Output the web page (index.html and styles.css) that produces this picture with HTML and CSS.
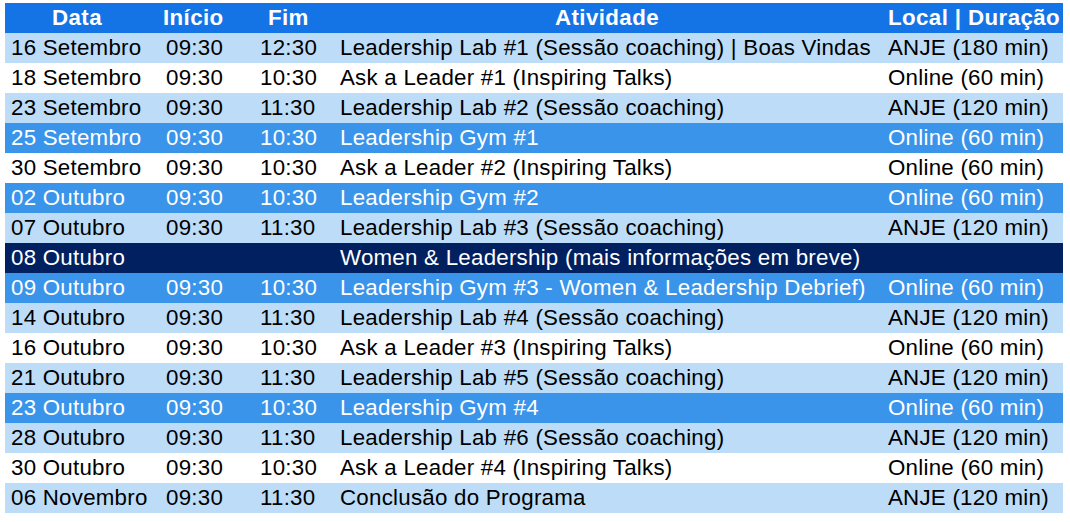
FILE: index.html
```html
<!DOCTYPE html>
<html lang="pt">
<head>
<meta charset="utf-8">
<title>Programa</title>
<link rel="stylesheet" href="styles.css">
</head>
<body>
<div class="wrap">
<table class="sched">
<colgroup>
<col class="c-data"><col class="c-ini"><col class="c-fim"><col class="c-act"><col class="c-loc">
</colgroup>
<thead>
<tr class="head">
<th class="h-data">Data</th><th class="h-ini">Início</th><th class="h-fim">Fim</th><th class="h-act">Atividade</th><th class="h-loc">Local | Duração</th>
</tr>
</thead>
<tbody>
<tr class="light"><td class="d">16 Setembro</td><td class="i">09:30</td><td class="f">12:30</td><td class="a">Leadership Lab #1 (Sessão coaching) | Boas Vindas</td><td class="l">ANJE (180 min)</td></tr>
<tr class="white"><td class="d">18 Setembro</td><td class="i">09:30</td><td class="f">10:30</td><td class="a">Ask a Leader #1 (Inspiring Talks)</td><td class="l">Online (60 min)</td></tr>
<tr class="light"><td class="d">23 Setembro</td><td class="i">09:30</td><td class="f">11:30</td><td class="a">Leadership Lab #2 (Sessão coaching)</td><td class="l">ANJE (120 min)</td></tr>
<tr class="mid"><td class="d">25 Setembro</td><td class="i">09:30</td><td class="f">10:30</td><td class="a">Leadership Gym #1</td><td class="l">Online (60 min)</td></tr>
<tr class="white"><td class="d">30 Setembro</td><td class="i">09:30</td><td class="f">10:30</td><td class="a">Ask a Leader #2 (Inspiring Talks)</td><td class="l">Online (60 min)</td></tr>
<tr class="mid"><td class="d">02 Outubro</td><td class="i">09:30</td><td class="f">10:30</td><td class="a">Leadership Gym #2</td><td class="l">Online (60 min)</td></tr>
<tr class="light"><td class="d">07 Outubro</td><td class="i">09:30</td><td class="f">11:30</td><td class="a">Leadership Lab #3 (Sessão coaching)</td><td class="l">ANJE (120 min)</td></tr>
<tr class="dark"><td class="d">08 Outubro</td><td class="i"></td><td class="f"></td><td class="a">Women &amp; Leadership (mais informações em breve)</td><td class="l"></td></tr>
<tr class="mid"><td class="d">09 Outubro</td><td class="i">09:30</td><td class="f">10:30</td><td class="a">Leadership Gym #3 - Women &amp; Leadership Debrief)</td><td class="l">Online (60 min)</td></tr>
<tr class="light"><td class="d">14 Outubro</td><td class="i">09:30</td><td class="f">11:30</td><td class="a">Leadership Lab #4 (Sessão coaching)</td><td class="l">ANJE (120 min)</td></tr>
<tr class="white"><td class="d">16 Outubro</td><td class="i">09:30</td><td class="f">10:30</td><td class="a">Ask a Leader #3 (Inspiring Talks)</td><td class="l">Online (60 min)</td></tr>
<tr class="light"><td class="d">21 Outubro</td><td class="i">09:30</td><td class="f">11:30</td><td class="a">Leadership Lab #5 (Sessão coaching)</td><td class="l">ANJE (120 min)</td></tr>
<tr class="mid"><td class="d">23 Outubro</td><td class="i">09:30</td><td class="f">10:30</td><td class="a">Leadership Gym #4</td><td class="l">Online (60 min)</td></tr>
<tr class="light"><td class="d">28 Outubro</td><td class="i">09:30</td><td class="f">11:30</td><td class="a">Leadership Lab #6 (Sessão coaching)</td><td class="l">ANJE (120 min)</td></tr>
<tr class="white"><td class="d">30 Outubro</td><td class="i">09:30</td><td class="f">10:30</td><td class="a">Ask a Leader #4 (Inspiring Talks)</td><td class="l">Online (60 min)</td></tr>
<tr class="light"><td class="d">06 Novembro</td><td class="i">09:30</td><td class="f">11:30</td><td class="a">Conclusão do Programa</td><td class="l">ANJE (120 min)</td></tr>
</tbody>
</table>
</div>
</body>
</html>
```
FILE: styles.css
```css
html, body {
  margin: 0;
  padding: 0;
  background: #ffffff;
}
.wrap {
  padding: 3px 5px;
}
.sched {
  border-collapse: collapse;
  table-layout: fixed;
  width: 1058px;
  font-family: "Liberation Sans", Arial, sans-serif;
  font-size: 22.3px;
  line-height: 30px;
  letter-spacing: 0.25px;
  color: #000000;
}
.c-data { width: 155px; }
.c-ini { width: 80px; }
.c-fim { width: 95px; }
.c-act { width: 548px; }
.c-loc { width: 180px; }
.sched th, .sched td {
  padding: 0;
  height: 30px;
  text-align: left;
  white-space: nowrap;
  overflow: visible;
  vertical-align: middle;
}
.head {
  background: #1474e6;
  color: #ffffff;
}
.head th {
  font-weight: bold;
  letter-spacing: 0.4px;
}
.h-data { padding-left: 47px !important; }
.h-ini { padding-left: 3px !important; }
.h-fim { padding-left: 28px !important; }
.h-act { padding-left: 220px !important; }
.h-loc { padding-left: 5px !important; }
.d { padding-left: 6px !important; }
.i { padding-left: 6px !important; }
.f { padding-left: 20px !important; }
.a { padding-left: 5px !important; }
.l { padding-left: 5px !important; }
.light { background: #bddcf8; }
.white { background: #ffffff; }
.mid { background: #3a94ea; color: #ffffff; }
.dark { background: #002060; color: #ffffff; }
```
